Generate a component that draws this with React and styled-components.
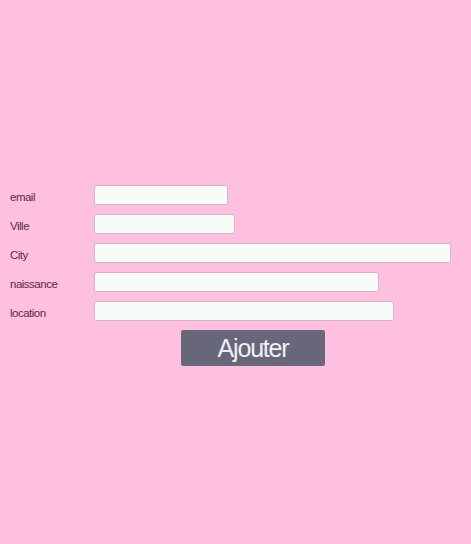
import styled, { createGlobalStyle } from 'styled-components';

const GlobalStyle = createGlobalStyle`
  html, body {
    margin: 0;
    padding: 0;
    background: #ffc0e0;
    font-family: "Liberation Sans", Arial, sans-serif;
  }
`;

const Page = styled('div')`
  min-height: 544px;
  box-sizing: border-box;
  padding-top: 185px;
`;

const Form = styled('form')`
  display: flex;
  flex-direction: column;
  gap: 9px;
`;

const Row = styled('div')`
  display: flex;
  align-items: center;
  height: 20px;
`;

const Label = styled('label')`
  width: 84px;
  padding-left: 10px;
  padding-top: 4px;
  font-size: 11.5px;
  color: #5a2c3e;
  letter-spacing: -0.5px;
`;

const Input = styled('input')`
  box-sizing: border-box;
  width: ${p => p.$w}px;
  height: 20px;
  margin: 0;
  padding: 0 4px;
  background: #f8fcf8;
  border: 1px solid #d4b4c4;
  border-radius: 2px;
  outline: none;
`;

const ButtonRow = styled('div')`
  display: flex;
  padding-left: 181px;
`;

const Button = styled('button')`
  width: 144px;
  height: 36px;
  padding: 0;
  background: #676779;
  border: none;
  border-radius: 2px;
  color: #f0f0f4;
  font-family: "Liberation Sans", Arial, sans-serif;
  font-size: 25px;
  letter-spacing: -1.2px;
  cursor: pointer;
`;

const fields = [
  { label: 'email', width: 134 },
  { label: 'Ville', width: 141 },
  { label: 'City', width: 357 },
  { label: 'naissance', width: 285 },
  { label: 'location', width: 300 },
];

export default function App() {
  return (
    <>
      <GlobalStyle />
      <Page>
        <Form onSubmit={e => e.preventDefault()}>
          {fields.map(f => (
            <Row key={f.label}>
              <Label>{f.label}</Label>
              <Input type="text" $w={f.width} />
            </Row>
          ))}
          <ButtonRow>
            <Button type="submit">Ajouter</Button>
          </ButtonRow>
        </Form>
      </Page>
    </>
  );
}
